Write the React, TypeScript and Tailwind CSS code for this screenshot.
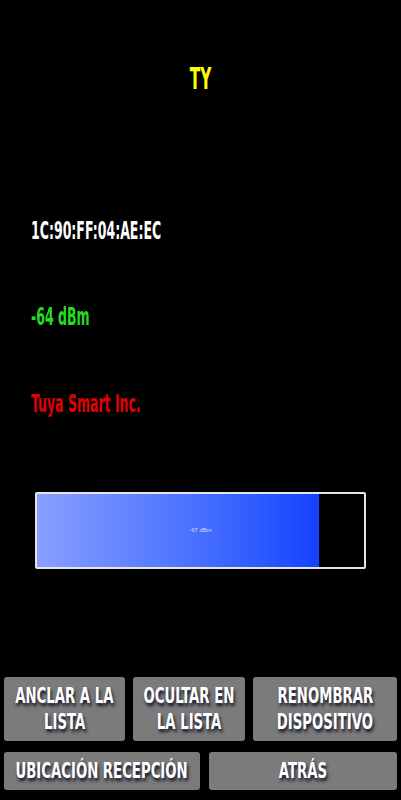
import React from 'react'

const font = { fontFamily: '"DejaVu Sans Condensed", "Liberation Sans Narrow", "Liberation Sans", sans-serif' }

function Narrow({ children, origin = 'origin-left', scale = 'scale-x-[0.58]' }: { children: React.ReactNode; origin?: string; scale?: string }) {
  return <span className={`inline-block whitespace-nowrap ${origin} ${scale}`}>{children}</span>
}

function Btn({ lines, className }: { lines: string[]; className?: string }) {
  return (
    <button
      type="button"
      className={`flex flex-col items-center justify-center rounded-[3px] bg-[#7b7b7b] text-center text-[22px] font-bold leading-[26px] text-white [text-shadow:2px_3px_4px_#101028] ${className ?? ''}`}
    >
      {lines.map((l) => (
        <Narrow key={l} origin="origin-center" scale="scale-x-[0.67]">{l}</Narrow>
      ))}
    </button>
  )
}

export default function App() {
  return (
    <div className="flex h-[800px] w-[401px] flex-col bg-black" style={font}>
      <div className="pt-[63px] text-center text-[31px] font-bold leading-[31px] text-[#ffff00]">
        <Narrow origin="origin-center" scale="scale-x-[0.55]">TY</Narrow>
      </div>
      <div className="mt-[125px] pl-[31px] text-[24px] font-bold leading-[24px] text-white">
        <Narrow>1C:90:FF:04:AE:EC</Narrow>
      </div>
      <div className="mt-[62px] pl-[31px] text-[24px] font-bold leading-[24px] text-[#22dd22]">
        <Narrow>-64 dBm</Narrow>
      </div>
      <div className="mt-[63px] pl-[31px] text-[24px] font-bold leading-[24px] text-[#e00000]">
        <Narrow>Tuya Smart Inc.</Narrow>
      </div>

      <div className="relative mx-[35px] mt-[76px] h-[77px] overflow-hidden rounded-[2px] border-2 border-[#e6e6e6]">
        <div className="h-full w-[282px] bg-gradient-to-r from-[#8a9eff] to-[#1440ff]" />
        <span
          className="absolute inset-0 flex items-center justify-center text-[6px] text-[#d8dcff]"
          style={{ fontFamily: '"Liberation Sans", sans-serif' }}
        >
          -67 dBm
        </span>
      </div>

      <div className="mt-auto flex flex-col gap-[11px] px-[4px] pb-[10px]">
        <div className="flex gap-[8px]">
          <Btn className="h-[64px] w-[121px]" lines={['ANCLAR A LA', 'LISTA']} />
          <Btn className="h-[64px] w-[112px]" lines={['OCULTAR EN', 'LA LISTA']} />
          <Btn className="h-[64px] flex-1" lines={['RENOMBRAR', 'DISPOSITIVO']} />
        </div>
        <div className="flex gap-[9px]">
          <Btn className="h-[38px] w-[196px]" lines={['UBICACIÓN RECEPCIÓN']} />
          <Btn className="h-[38px] flex-1" lines={['ATRÁS']} />
        </div>
      </div>
    </div>
  )
}
